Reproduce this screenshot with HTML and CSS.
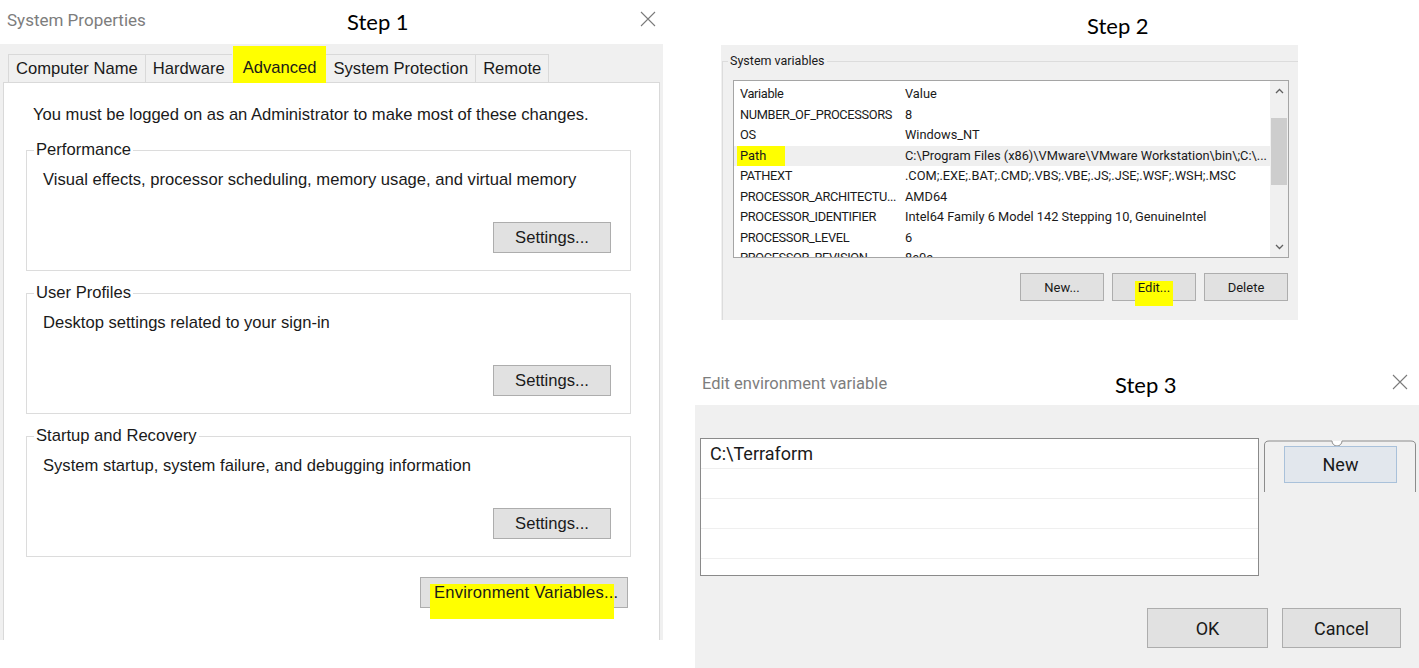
FILE: index.html
```html
<!DOCTYPE html>
<html lang="en">

<head>
    <meta charset="UTF-8">
    <title>Terraform Path Setup</title>
    <link rel="stylesheet" href="styles.css">
</head>

<body>
    <div class="page">

        <!-- Step 1: System Properties -->
        <section class="sysprops">
            <header class="titlebar">
                <span class="title">System Properties</span>
                <span class="step">Step 1</span>
                <svg class="close" width="16" height="16" viewBox="0 0 16 16">
                    <path d="M1 1L15 15M15 1L1 15" stroke="#7a7a7a" stroke-width="1.1" fill="none" />
                </svg>
            </header>
            <div class="dlg-body">
                <nav class="tabs">
                    <span class="tab">Computer Name</span>
                    <span class="tab">Hardware</span>
                    <span class="tab tab-active">Advanced</span>
                    <span class="tab">System Protection</span>
                    <span class="tab tab-last">Remote</span>
                </nav>
                <div class="tab-page">
                    <p class="note">You must be logged on as an Administrator to make most of these changes.</p>

                    <fieldset class="group">
                        <legend>Performance</legend>
                        <p>Visual effects, processor scheduling, memory usage, and virtual memory</p>
                        <div class="btn-row"><button class="btn">Settings...</button></div>
                    </fieldset>

                    <fieldset class="group">
                        <legend>User Profiles</legend>
                        <p>Desktop settings related to your sign-in</p>
                        <div class="btn-row"><button class="btn">Settings...</button></div>
                    </fieldset>

                    <fieldset class="group">
                        <legend>Startup and Recovery</legend>
                        <p>System startup, system failure, and debugging information</p>
                        <div class="btn-row"><button class="btn">Settings...</button></div>
                    </fieldset>

                    <div class="env-row">
                        <button class="btn env-btn"><span class="hl hl-env">Environment Variables</span>...</button>
                    </div>
                </div>
            </div>
        </section>

        <div class="right">
            <!-- Step 2: System variables -->
            <section class="step2">
                <div class="step step-label">Step 2</div>
                <div class="envvars">
                    <fieldset class="sysvars">
                        <legend>System variables</legend>
                        <div class="listbox">
                            <div class="rows">
                                <div class="row"><span>Variable</span><span>Value</span></div>
                                <div class="row"><span>NUMBER_OF_PROCESSORS</span><span>8</span></div>
                                <div class="row"><span>OS</span><span>Windows_NT</span></div>
                                <div class="row row-sel"><span><span class="hl hl-path">Path</span></span><span>C:\Program Files (x86)\VMware\VMware Workstation\bin\;C:\...</span></div>
                                <div class="row"><span>PATHEXT</span><span>.COM;.EXE;.BAT;.CMD;.VBS;.VBE;.JS;.JSE;.WSF;.WSH;.MSC</span></div>
                                <div class="row"><span>PROCESSOR_ARCHITECTU...</span><span>AMD64</span></div>
                                <div class="row"><span>PROCESSOR_IDENTIFIER</span><span>Intel64 Family 6 Model 142 Stepping 10, GenuineIntel</span></div>
                                <div class="row"><span>PROCESSOR_LEVEL</span><span>6</span></div>
                                <div class="row"><span>PROCESSOR_REVISION</span><span>8e0a</span></div>
                            </div>
                            <div class="scroll">
                                <div class="sb-arrow">
                                    <svg width="9" height="6" viewBox="0 0 9 6"><path d="M1 5L4.5 1.5L8 5" stroke="#606060" stroke-width="1.3" fill="none" /></svg>
                                </div>
                                <div class="thumb"></div>
                                <div class="sb-space"></div>
                                <div class="sb-arrow">
                                    <svg width="9" height="6" viewBox="0 0 9 6"><path d="M1 1L4.5 4.5L8 1" stroke="#606060" stroke-width="1.3" fill="none" /></svg>
                                </div>
                            </div>
                        </div>
                        <div class="btns">
                            <button class="btn-sm">New...</button>
                            <button class="btn-sm"><span class="hl hl-edit">Edit...</span></button>
                            <button class="btn-sm">Delete</button>
                        </div>
                    </fieldset>
                </div>
            </section>

            <!-- Step 3: Edit environment variable -->
            <section class="editvar">
                <header class="titlebar titlebar-ev">
                    <span class="title title-ev">Edit environment variable</span>
                    <span class="step step-ev">Step 3</span>
                    <svg class="close close-ev" width="16" height="16" viewBox="0 0 16 16">
                        <path d="M1 1L15 15M15 1L1 15" stroke="#7a7a7a" stroke-width="1.1" fill="none" />
                    </svg>
                </header>
                <div class="ev-body">
                    <div class="ev-top">
                        <div class="pathlist">
                            <div class="vrow">C:\Terraform</div>
                            <div class="vrow"></div>
                            <div class="vrow"></div>
                            <div class="vrow"></div>
                            <div class="vrow"></div>
                        </div>
                        <div class="side">
                            <svg class="frame-top" width="156" height="10" viewBox="0 0 156 10">
                                <path d="M70 3A5 5 0 0 0 80 3Z" fill="#fff" />
                                <path d="M2.5 10V7Q2.5 3 7 3H70A5 5 0 0 0 80 3H149Q153.5 3 153.5 7V10" stroke="#8c8c8c" stroke-width="1" fill="none" />
                            </svg>
                            <div class="frame-sides">
                                <button class="btn-new">New</button>
                            </div>
                        </div>
                    </div>
                    <div class="ev-btns">
                        <button class="btn-lg btn-ok">OK</button>
                        <button class="btn-lg btn-cancel">Cancel</button>
                    </div>
                </div>
            </section>
        </div>
    </div>
</body>

</html>
```

FILE: styles.css
```css
body {
    margin: 0;
    background-color: #fff;
    color: #1a1a1a;
    font-family: 'Liberation Sans', Arial, sans-serif;
    overflow: hidden;
}

.page {
    display: flex;
    align-items: flex-start;
    width: 1419px;
    height: 668px;
}

/* shared bits */
.titlebar {
    display: flex;
    align-items: center;
    background: #fff;
}

.title {
    font-family: Roboto, sans-serif;
    color: #7d7d7d;
}

.step {
    font-family: Lato, sans-serif;
    font-size: 22px;
    line-height: 26px;
    color: #000;
}

.close {
    margin-left: auto;
}

.hl {
    background: #ffff00;
    display: inline-block;
}

/* Step 1 */
.sysprops {
    width: 663px;
    height: 640px;
    display: flex;
    flex-direction: column;
}

.sysprops .titlebar {
    height: 44px;
}

.sysprops .title {
    flex: 0 0 340px;
    margin-left: 7px;
    margin-top: -4px;
    font-size: 17px;
}

.sysprops .close {
    margin-right: 7px;
    margin-top: -6px;
}

.dlg-body {
    flex: 1;
    background: #f0f0f0;
    display: flex;
    flex-direction: column;
}

.tabs {
    display: flex;
    align-items: flex-end;
    height: 36px;
    margin-top: 2px;
    padding-left: 8px;
}

.tab {
    height: 28px;
    box-sizing: border-box;
    border: 1px solid #d9d9d9;
    border-bottom: none;
    border-right: none;
    padding: 0 7px;
    line-height: 28px;
    font-size: 16.6px;
    background: #f0f0f0;
}

.tab-last {
    border-right: 1px solid #d9d9d9;
}

.tab-active {
    height: 37px;
    margin: 0 -1px -1px 1px;
    padding: 12px 10px 0 9px;
    line-height: 18px;
    background: #ffff00;
    border-color: #ffff00;
    position: relative;
}

.tab-page {
    flex: 1;
    background: #fff;
    border: 1px solid #d9d9d9;
    border-bottom: none;
    margin: 0 3px;
    padding-left: 22px;
}

.note {
    margin: 23px 0 0 7px;
    font-size: 16.6px;
    line-height: 18px;
}

.group {
    width: 605px;
    box-sizing: border-box;
    margin: 17px 0 0;
    border: 1px solid #dcdcdc;
    padding: 0 19px 17px 16px;
    font-size: 16.6px;
}

.group + .group {
    margin-top: 13px;
}

.group legend {
    padding: 0 2px;
    margin-left: -9px;
    line-height: 18px;
}

.group p {
    margin: 12px 0 0;
    line-height: 18px;
}

.btn-row {
    display: flex;
    justify-content: flex-end;
    margin-top: 33px;
}

.btn {
    width: 118px;
    height: 31px;
    padding: 0;
    background: #e1e1e1;
    border: 1px solid #adadad;
    color: #1a1a1a;
    font-family: 'Liberation Sans', Arial, sans-serif;
    font-size: 16.6px;
    overflow: visible;
}

.env-row {
    width: 602px;
    display: flex;
    justify-content: flex-end;
    margin-top: 20px;
}

.env-btn {
    width: 208px;
    text-align: left;
    padding-left: 13px;
    letter-spacing: 0.2px;
}

.hl-env {
    padding: 0 10px 17px 4px;
    margin: 0 -10px -17px -4px;
    line-height: 18px;
}

/* Step 2 */
.right {
    flex: 1;
    display: flex;
    flex-direction: column;
    margin-left: 32px;
}

.step2 {
    display: flex;
    flex-direction: column;
}

.step-label {
    height: 45px;
    box-sizing: border-box;
    padding: 13px 0 0 392px;
}

.envvars {
    margin-left: 26px;
    width: 577px;
    height: 275px;
    box-sizing: border-box;
    padding-top: 8px;
    background: #f0f0f0;
    overflow: hidden;
    font-family: Roboto, sans-serif;
    font-size: 12.8px;
}

.sysvars {
    margin: 0 -30px 0 1px;
    border: 1px solid #dcdcdc;
    border-bottom: none;
    padding: 0 0 0 10px;
    height: 300px;
}

.sysvars legend {
    padding: 0 2px;
    margin-left: -5px;
    font-size: 12.5px;
    line-height: 16px;
}

.listbox {
    margin-top: 11px;
    width: 556px;
    height: 178px;
    box-sizing: border-box;
    border: 1px solid #a5a5a5;
    background: #fff;
    display: flex;
}

.rows {
    flex: 1;
    overflow: hidden;
    padding-top: 3px;
}

.row {
    display: grid;
    grid-template-columns: 165px 1fr;
    height: 20.5px;
    line-height: 20.5px;
    padding-left: 6px;
    white-space: nowrap;
}

.row > span:first-child {
    letter-spacing: -0.35px;
}

.row-sel {
    background: #efefef;
}

.hl-path {
    padding: 0 19px 0 3px;
    margin-left: -3px;
    line-height: 20px;
    letter-spacing: 0;
}

.scroll {
    width: 18px;
    background: #f0f0f0;
    display: flex;
    flex-direction: column;
    align-items: center;
}

.sb-arrow {
    height: 20px;
    display: flex;
    align-items: center;
    justify-content: center;
}

.thumb {
    width: 16px;
    height: 67px;
    margin-top: 17px;
    background: #cdcdcd;
}

.sb-space {
    flex: 1;
}

.btns {
    width: 555px;
    display: flex;
    justify-content: flex-end;
    gap: 8px;
    margin-top: 15px;
}

.btn-sm {
    width: 84px;
    height: 28px;
    padding: 0;
    background: #e1e1e1;
    border: 1px solid #adadad;
    color: #1a1a1a;
    font-family: Roboto, sans-serif;
    font-size: 13px;
    overflow: visible;
}

.hl-edit {
    padding: 0 3px 11px;
    margin-bottom: -11px;
    line-height: 14px;
}

/* Step 3 */
.editvar {
    margin-top: 30px;
    height: 318px;
    display: flex;
    flex-direction: column;
}

.titlebar-ev {
    height: 55px;
    box-sizing: border-box;
    padding-top: 11px;
}

.title-ev {
    flex: 0 0 413px;
    margin-left: 7px;
    font-size: 16.5px;
}

.step-ev {
    margin-top: 4px;
}

.close-ev {
    margin-right: 11px;
    margin-top: -2px;
}

.ev-body {
    flex: 1;
    background: #f0f0f0;
    padding-top: 33px;
    font-family: Roboto, sans-serif;
}

.ev-top {
    display: flex;
    align-items: flex-start;
}

.pathlist {
    margin-left: 5px;
    width: 559px;
    height: 138px;
    box-sizing: border-box;
    border: 1px solid #8a8a8a;
    background: #fff;
    overflow: hidden;
}

.vrow {
    height: 30px;
    box-sizing: border-box;
    border-bottom: 1px solid #efefef;
    padding-left: 9px;
    font-size: 18px;
    line-height: 29px;
}

.side {
    margin: 0 0 0 3px;
    width: 156px;
    display: flex;
    flex-direction: column;
}

.frame-top {
    display: block;
}

.frame-sides {
    height: 44px;
    margin: 0 2px;
    border-left: 1px solid #8c8c8c;
    border-right: 1px solid #8c8c8c;
    padding-left: 19px;
}

.btn-new {
    width: 113px;
    height: 37px;
    margin-top: -2px;
    padding: 0;
    background: #e2e7ed;
    border: 1px solid #a9c1da;
    color: #1a1a1a;
    font-family: Roboto, sans-serif;
    font-size: 18px;
}

.ev-btns {
    display: flex;
    justify-content: flex-end;
    gap: 14px;
    margin-top: 32px;
    padding-right: 18px;
}

.btn-lg {
    height: 40px;
    padding: 0;
    background: #e1e1e1;
    border: 1px solid #adadad;
    color: #1a1a1a;
    font-family: Roboto, sans-serif;
    font-size: 18px;
}

.btn-ok {
    width: 121px;
}

.btn-cancel {
    width: 119px;
}
```
